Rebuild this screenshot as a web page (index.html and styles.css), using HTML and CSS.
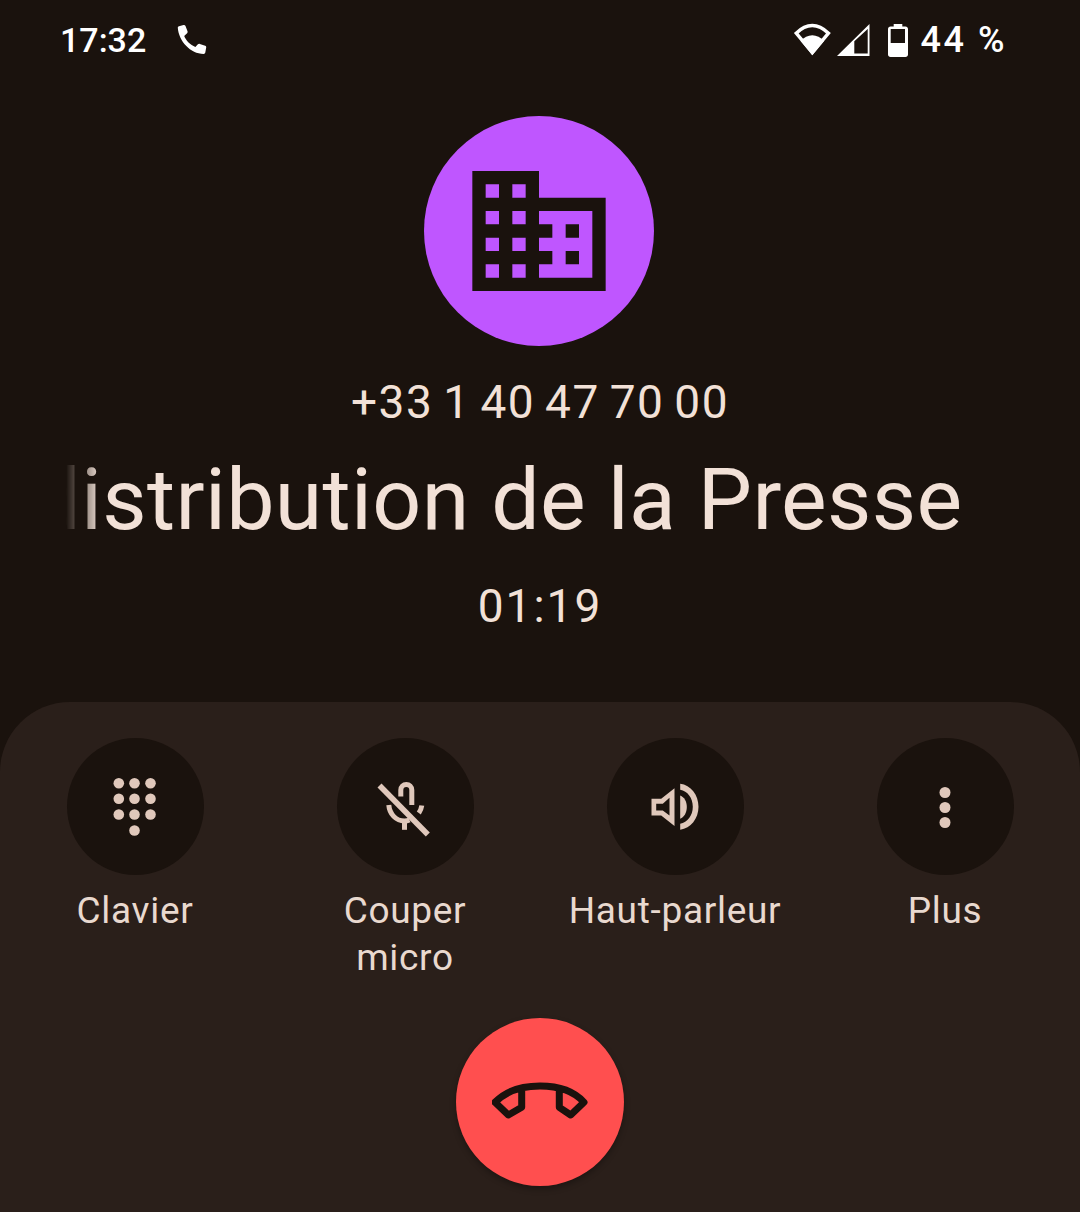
FILE: index.html
```html
<!DOCTYPE html>
<html lang="fr">
<head>
<meta charset="utf-8">
<title>Appel</title>
<link rel="stylesheet" href="styles.css">
</head>
<body>
<main class="screen">
  <header class="status">
    <div class="status-left">
      <span class="clock">17:32</span>
      <svg class="ic-call" viewBox="0 0 32 32"><path d="M3 2.200 7.500 1c.9-.2 1.700.2 2 1.100l2 5.200c.3.700.1 1.400-.4 1.900L8.200 12.100c1.800 4.500 6 9 11.200 10.800l2.500-2.600c.5-.5 1.200-.7 1.900-.4l5.400 1.900c.8.300 1.200 1 1 1.800l-.9 4.900c-.2.900-.8 1.400-1.600 1.400C14.500 29.900 2.700 17 1.800 3.700 1.800 3 2.300 2.400 3 2.200z"/></svg>
    </div>
    <div class="status-right">
      <svg class="ic-wifi" viewBox="0 0 40 34"><path class="line" d="M19.300 29.500 3.200 10.200C8 5.500 13 2.500 19.300 2.500s11.200 3 16.200 7.700z"/><path d="M19.300 32.300 7.700 18C11 14.500 15 12.300 19.300 12.300s8.300 2.200 11.700 5.700z"/></svg>
      <svg class="ic-signal" viewBox="0 0 33 33"><path fill-rule="evenodd" d="M0 32 32.500 0V32zM17.300 17.300V29.500H30.700V5z"/></svg>
      <svg class="ic-battery" viewBox="0 0 20 33"><path fill-rule="evenodd" d="M5.700 0h8.600v2.500h3.200c1.400 0 2.500 1.100 2.500 2.500v25.500c0 1.400-1.100 2.500-2.500 2.500h-15C1.100 33 0 31.900 0 30.500V5c0-1.400 1.100-2.500 2.500-2.500h3.200zM2.700 5v14H17V5z"/></svg>
      <span class="percent">44 %</span>
    </div>
  </header>

  <section class="caller">
    <div class="avatar">
      <svg class="ic-building" viewBox="0 0 24 24"><path d="M12 7V3H2v18h20V7H12zM6 19H4v-2h2v2zm0-4H4v-2h2v2zm0-4H4V9h2v2zm0-4H4V5h2v2zm4 12H8v-2h2v2zm0-4H8v-2h2v2zm0-4H8V9h2v2zm0-4H8V5h2v2zm10 12h-8v-2h2v-2h-2v-2h2v-2h-2V9h8v10zm-2-8h-2v2h2v-2zm0 4h-2v2h2v-2z"/></svg>
    </div>
    <p class="number">+33 1 40 47 70 00</p>
    <div class="title-clip"><h1 class="title">distribution de la Presse</h1></div>
    <p class="timer">01:19</p>
  </section>

  <section class="panel">
    <div class="controls">
      <div class="control">
        <span class="round">
          <svg class="ic" viewBox="0 0 48 48"><g class="dots"><circle cx="7.800" cy=".2" r="5.300"/><circle cx="23.500" cy=".2" r="5.300"/><circle cx="39.500" cy=".2" r="5.300"/><circle cx="7.800" cy="15.800" r="5.300"/><circle cx="23.500" cy="15.800" r="5.300"/><circle cx="39.500" cy="15.800" r="5.300"/><circle cx="7.800" cy="31.500" r="5.300"/><circle cx="23.500" cy="31.500" r="5.300"/><circle cx="39.500" cy="31.500" r="5.300"/><circle cx="23.500" cy="47.500" r="5.300"/></g></svg>
        </span>
        <span class="label">Clavier</span>
      </div>
      <div class="control">
        <span class="round">
          <svg class="ic" viewBox="0 0 48 48"><g class="strokes"><path d="M19.800 13.500V7a5.500 5.500 0 0 1 11 0V22"/><path d="M7.800 22C8.500 31 15 38 23.500 38c1.700 0 3.400-.3 5-1"/><path d="M40.800 22.500c-.4 2.700-1.500 5.500-3 7.500"/><path d="M23.500 38v8.800"/><path class="slash" d="M-1.500 2.500 46.800 51.500"/></g></svg>
        </span>
        <span class="label">Couper<br>micro</span>
      </div>
      <div class="control">
        <span class="round">
          <svg class="ic" viewBox="0 0 48 48"><path class="solid-ic" fill-rule="evenodd" d="M.5 15.800h9.700L23.500 5.200V43L10.200 32.500H.5zM5.200 20.800v6.700h6.600l6.700 5V14.800l-6.700 6z"/><path class="solid-ic" d="M29.200.8C39.700 2 47.500 12 47.500 23.800S39.700 45.500 29.200 46.800v-6C36.500 39.500 41.800 32.500 41.800 23.800S36.500 8 29.200 6.800z"/><path class="solid-ic" d="M29.200 12.500c4 1.500 6.600 6 6.600 11.500s-2.600 10.300-6.600 11.800z"/></svg>
        </span>
        <span class="label">Haut-parleur</span>
      </div>
      <div class="control">
        <span class="round">
          <svg class="ic" viewBox="0 0 48 48"><g class="dots"><circle cx="24" cy="9.500" r="5.500"/><circle cx="24" cy="24.500" r="5.500"/><circle cx="24" cy="39.500" r="5.500"/></g></svg>
        </span>
        <span class="label">Plus</span>
      </div>
    </div>
    <button class="hangup" type="button" aria-label="Raccrocher">
      <svg class="ic-hangup" viewBox="0 0 96 40"><path d="M3 20.300C14 9 30 4 48 4s34 5 44 16.300L78.700 33 67.300 25.300V8M29.700 8V25.300L16.300 33 3 20.300"/></svg>
    </button>
  </section>
</main>
</body>
</html>
```
FILE: styles.css
```css
html, body {
  margin: 0;
  padding: 0;
  background: #1a120d;
}

.screen {
  width: 1080px;
  height: 1212px;
  display: flex;
  flex-direction: column;
  overflow: hidden;
  font-family: Roboto, "Noto Sans", sans-serif;
  color: #f2e1d7;
}

.status {
  flex: none;
  height: 80px;
  padding: 0 73px 0 60px;
  display: flex;
  justify-content: space-between;
  align-items: center;
  color: #fff;
  font-size: 34px;
  font-weight: 500;
}

.status-left, .status-right {
  display: flex;
  align-items: center;
}

.clock { width: 116px; }

.ic-call { width: 32px; height: 32px; fill: #fff; }

.status-right svg { fill: #fff; flex: none; }
.ic-wifi { width: 40px; height: 34px; }
.ic-wifi .line { fill: none; stroke: #fff; stroke-width: 3.4; }
.ic-signal { width: 33px; height: 33px; margin-left: 4px; }
.ic-battery { width: 20px; height: 33px; margin-left: 18px; }
.percent { margin-left: 13px; font-size: 36px; letter-spacing: 2.5px; }

.caller {
  flex: none;
  display: flex;
  flex-direction: column;
  align-items: center;
  padding-top: 36px;
  height: 622px;
  box-sizing: border-box;
}

.avatar {
  width: 230px;
  height: 230px;
  border-radius: 50%;
  background: #bf56ff;
  display: flex;
  align-items: center;
  justify-content: center;
  flex: none;
  margin-left: -2px;
}

.ic-building { width: 160px; height: 160px; fill: #1a120d; }

.number {
  margin: 26px 0 0;
  font-size: 46px;
  line-height: 60px;
  height: 60px;
  letter-spacing: 1.5px;
  word-spacing: -3px;
}

.title-clip {
  width: 899px;
  margin-top: 13px;
  margin-left: -50px;
  display: flex;
  justify-content: flex-end;
  overflow: hidden;
  -webkit-mask-image: linear-gradient(90deg, transparent 0, #000 34px);
  mask-image: linear-gradient(90deg, transparent 0, #000 34px);
}

.title {
  margin: 0;
  flex: none;
  padding-right: 2px;
  font-size: 86px;
  font-weight: 400;
  line-height: 110px;
  letter-spacing: .35px;
  white-space: nowrap;
}

.timer {
  margin: 21px 0 0;
  font-size: 46px;
  line-height: 60px;
  letter-spacing: 2px;
}

.panel {
  flex: 1;
  background: #2a1f1a;
  border-radius: 70px 70px 0 0;
  display: flex;
  flex-direction: column;
  align-items: center;
  padding-top: 36px;
}

.controls {
  width: 1080px;
  height: 280px;
  display: grid;
  grid-template-columns: repeat(4, 270px);
}

.control {
  display: flex;
  flex-direction: column;
  align-items: center;
  text-align: center;
  color: #e9d9cf;
}

.round {
  width: 137px;
  height: 137px;
  border-radius: 50%;
  background: #1a120d;
  display: flex;
  align-items: center;
  justify-content: center;
}

.ic { width: 48px; height: 48px; overflow: visible; }
.dots { fill: #e0c8bb; }
.solid-ic { fill: #e0c8bb; }
.strokes { fill: none; stroke: #e0c8bb; stroke-width: 5; }
.slash { stroke-width: 5.6; }

.label {
  margin-top: 12px;
  font-size: 37px;
  line-height: 47px;
  letter-spacing: .7px;
}

.hangup {
  width: 168px;
  height: 168px;
  border: 0;
  padding: 0;
  border-radius: 50%;
  background: #ff4f4f;
  box-shadow: 0 3px 6px rgba(0, 0, 0, .3);
  display: flex;
  align-items: center;
  justify-content: center;
}

.ic-hangup {
  width: 96px;
  height: 40px;
  fill: none;
  stroke: #1a120d;
  stroke-width: 7;
  stroke-linejoin: round;
  stroke-linecap: round;
}
```
